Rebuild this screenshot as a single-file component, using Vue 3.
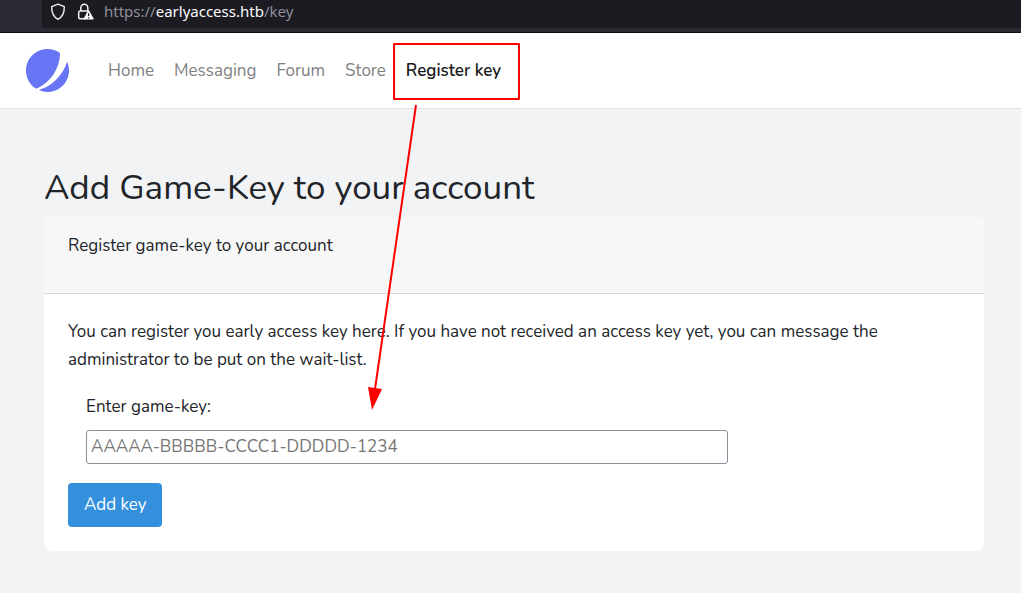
<script setup>
import { ref } from 'vue'

const links = [
  { label: 'Home', href: '#home' },
  { label: 'Messaging', href: '#messaging' },
  { label: 'Forum', href: '#forum' },
  { label: 'Store', href: '#store' },
  { label: 'Register key', href: '#key', active: true },
]
const gameKey = ref('')
</script>

<template>
  <div class="page">
    <div class="browser-bar">
      <div class="address">
        <svg class="shield" viewBox="0 0 16 18" aria-hidden="true">
          <path d="M8 1.2 14.3 3.6C14.5 9.5 12.4 14 8 16.4 3.6 14 1.5 9.5 1.7 3.6Z" fill="none" stroke="#f2f2f6" stroke-width="1.4" stroke-linejoin="round" />
        </svg>
        <svg class="lock" viewBox="0 0 18 18" aria-hidden="true">
          <path d="M3.8 8V4.7a3.5 3.5 0 0 1 7 0V8M7.5 15.8H3.2a1.5 1.5 0 0 1-1.5-1.5V9.5A1.5 1.5 0 0 1 3.2 8h8.2" fill="none" stroke="#f2f2f6" stroke-width="1.5" stroke-linecap="round" />
          <path d="M11.6 8.2 16 15.8H7.2Z" fill="#fff" stroke="#fff" stroke-width="1.4" stroke-linejoin="round" />
          <path d="M11.6 10.2v2.8M11.6 14.2v1.3" stroke="#1c1b22" stroke-width="1.3" />
        </svg>
        <span class="url">https://<b>earlyaccess.htb</b>/key</span>
      </div>
    </div>

    <nav class="navbar">
      <a class="logo" href="#home" aria-label="EarlyAccess">
        <svg viewBox="0 0 48 48" fill="#6875f5" aria-hidden="true">
          <path d="M11.395 44.428C4.557 40.198 0 32.632 0 24 0 10.745 10.745 0 24 0a23.891 23.891 0 0 1 13.997 4.502c-.2 17.907-11.097 33.245-26.602 39.926z" />
          <path d="M14.134 45.885A23.914 23.914 0 0 0 24 48c13.255 0 24-10.745 24-24 0-3.516-.756-6.856-2.115-9.866-4.659 15.143-16.608 27.092-31.75 31.751z" />
        </svg>
      </a>
      <a v-for="link in links" :key="link.label" class="link" :class="{ active: link.active }" :href="link.href">{{ link.label }}</a>
    </nav>

    <main class="content">
      <h1>Add Game-Key to your account</h1>
      <section class="card">
        <header class="card-header">Register game-key to your account</header>
        <form class="card-body" @submit.prevent>
          <p>You can register you early access key here. If you have not received an access key yet, you can message the administrator to be put on the wait-list.</p>
          <div class="field">
            <label for="game-key">Enter game-key:</label>
            <input id="game-key" v-model="gameKey" type="text" placeholder="AAAAA-BBBBB-CCCC1-DDDDD-1234" />
          </div>
          <button type="submit">Add key</button>
        </form>
      </section>
    </main>

    <svg class="annotation" width="540" height="420" aria-hidden="true">
      <rect x="394" y="44" width="125" height="55" fill="none" stroke="#f00" stroke-width="2" stroke-linejoin="round" />
      <path d="M416 105 375 389" stroke="#f00" stroke-width="2" />
      <path d="M368 387 382 389 372 410Z" fill="#f00" />
    </svg>
  </div>
</template>

<style>
body {
  margin: 0;
  background: #f2f3f5;
}
</style>

<style scoped>
.page {
  position: relative;
  font-family: Nunito, Lato, sans-serif;
  font-size: 17px;
  line-height: 28px;
  color: #212529;
}
.browser-bar {
  padding: 0 0 4px 42px;
  background: #2b2a33;
  border-bottom: 1px solid #0c0c0d;
}
.address {
  display: flex;
  align-items: center;
  height: 28px;
  padding: 0 8px 4px;
  box-sizing: border-box;
  background: #1c1b22;
  border-bottom-left-radius: 4px;
}
.shield {
  width: 16px;
  height: 18px;
}
.lock {
  width: 18px;
  height: 18px;
  margin: 0 9px 0 11px;
}
.url {
  padding-bottom: 2px;
  font: 15px/22px "Noto Sans", sans-serif;
  color: #8f8f9a;
}
.url b {
  font-weight: 400;
  color: #fbfbfe;
}
.navbar {
  display: flex;
  align-items: center;
  gap: 20px;
  padding: 16px 26px;
  background: #fff;
  border-bottom: 1px solid #dee2e6;
}
.logo {
  margin-right: 19px;
}
.logo svg {
  display: block;
  width: 43px;
  height: 43px;
}
.link {
  color: #808080;
  text-decoration: none;
}
.link.active {
  font-weight: 600;
  color: #1a1a1a;
}
.content {
  padding: 57px 37px 42px 44px;
}
h1 {
  margin: 0 0 7px;
  font-size: 35px;
  font-weight: 400;
  line-height: 44px;
}
.card {
  overflow: hidden;
  background: #fff;
  border-radius: 8px;
}
.card-header {
  padding: 15px 24px 33px;
  background: #f7f7f7;
  border-bottom: 1px solid #d6d7d8;
}
.card-body {
  padding: 24px;
}
p {
  margin: 0 0 19px;
}
.field {
  display: grid;
  gap: 9px;
  width: 72%;
  margin: 0 0 19px 18px;
}
input {
  box-sizing: border-box;
  height: 34px;
  padding: 0 4px 2px;
  font: inherit;
  color: #212529;
  background: #fff;
  border: 1px solid #8f8f9d;
  border-radius: 3px;
}
input::placeholder {
  color: #757575;
  opacity: 1;
}
button {
  padding: 8px 16px;
  font: inherit;
  color: #fff;
  background: #3490dc;
  border: 0;
  border-radius: 4px;
}
.annotation {
  position: absolute;
  top: 0;
  left: 0;
  pointer-events: none;
}
</style>
